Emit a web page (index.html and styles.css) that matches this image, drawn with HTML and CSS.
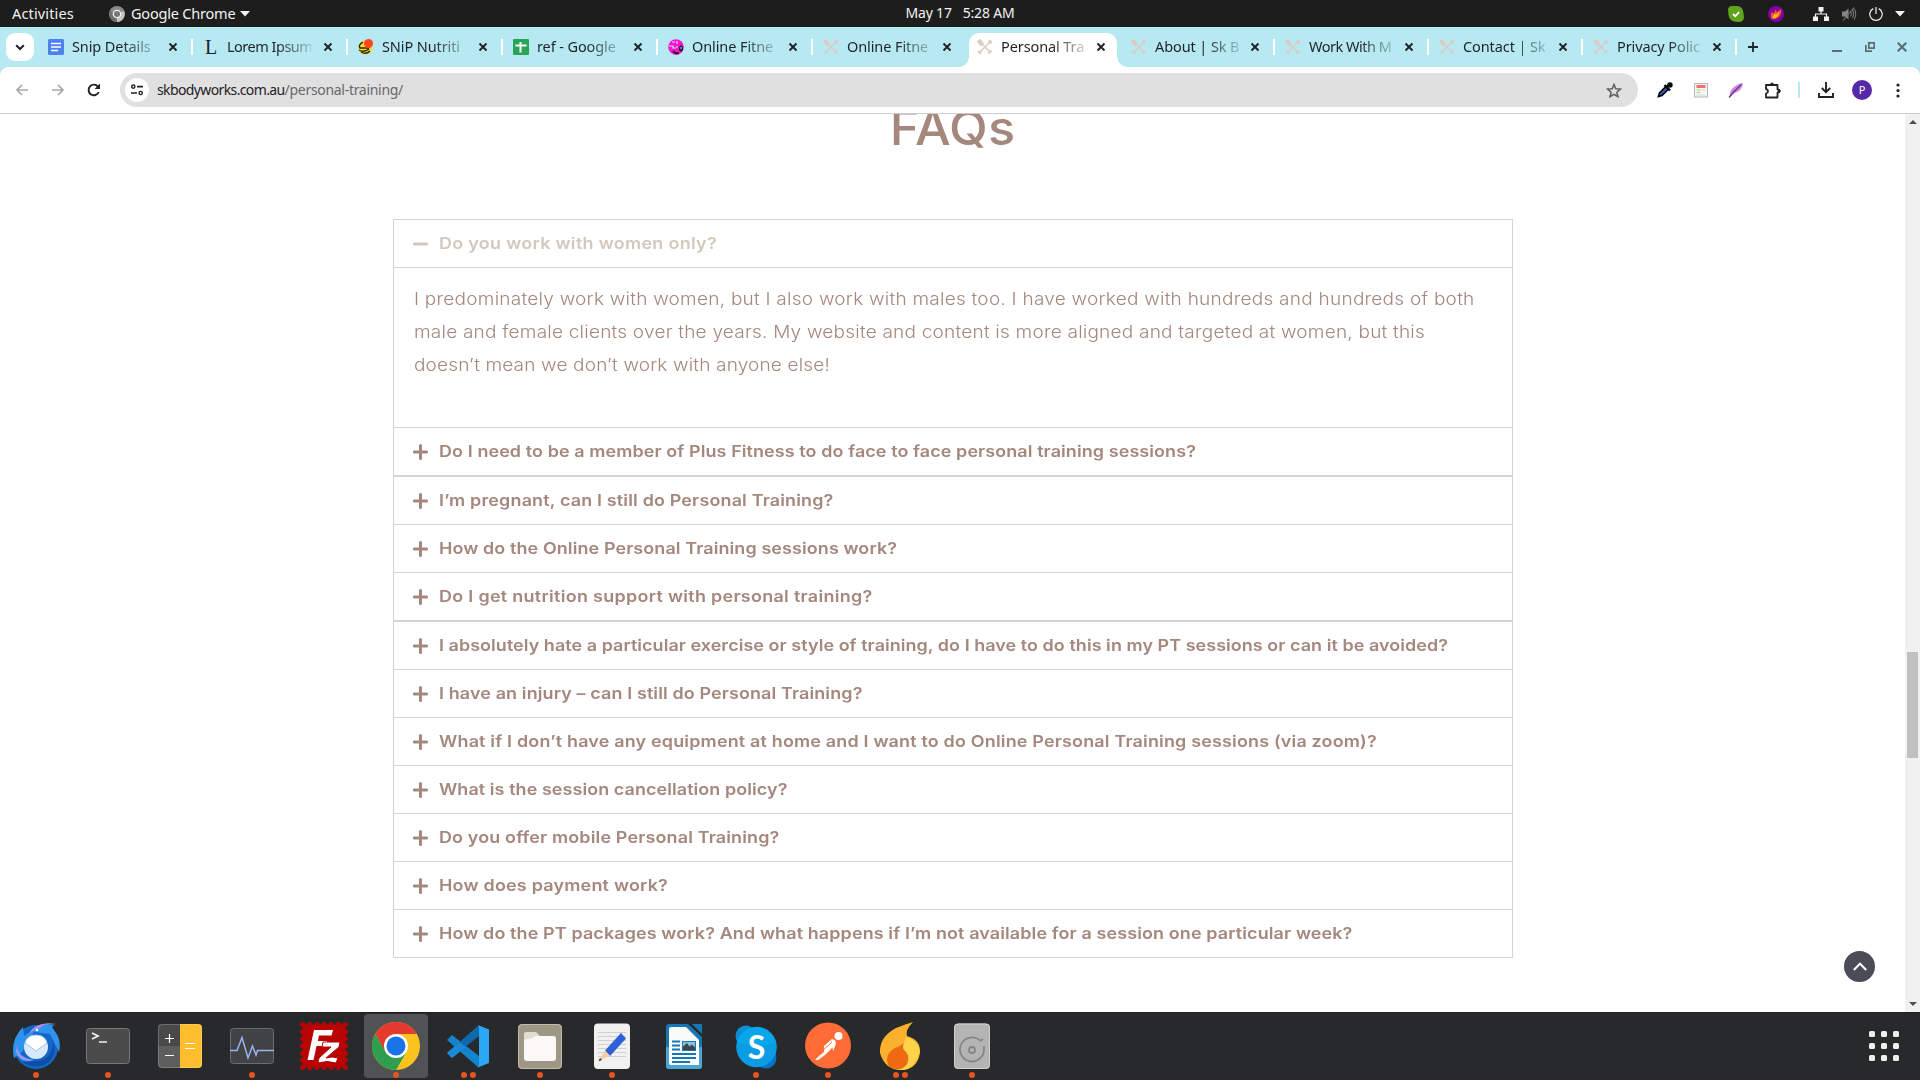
FILE: index.html
```html
<!DOCTYPE html>
<html lang="en">
<head>
<meta charset="utf-8">
<title>Personal Training</title>
<link rel="stylesheet" href="styles.css">
</head>
<body>
<svg class="defs" width="0" height="0" aria-hidden="true">
  <symbol id="x" viewBox="0 0 10 10"><path d="M1.500 1.500 8.500 8.500M8.500 1.500 1.500 8.500" stroke="#1f2226" stroke-width="1.900"/></symbol>
  <symbol id="bells" viewBox="0 0 16 16"><path d="M3.500 3.500 13 13M12.500 3.500 3 13" stroke="#d9cdc3" stroke-width="1.500"/><path d="M1 2.500 3 1 5.500 4.500 4 6ZM11.500 14.500 14.500 11.500M1.200 12 4 14.800" fill="#d9cdc3" stroke="#d9cdc3" stroke-width="2"/><circle cx="13" cy="3" r="2" fill="#d9cdc3"/></symbol>
  <symbol id="plus" viewBox="0 0 15 16"><path d="M1.400 8H13.600M7.500 1.500V14.500" stroke="currentColor" stroke-width="3" stroke-linecap="round"/></symbol>
  <symbol id="minus" viewBox="0 0 15 16"><path d="M1.400 8H13.600" stroke="currentColor" stroke-width="3" stroke-linecap="round"/></symbol>
</svg>

<header class="topbar">
  <div class="top-left">
    <span class="t-act">Activities</span>
    <svg width="16" height="16" viewBox="0 0 16 16"><circle cx="8" cy="8" r="8" fill="#8a8a8a"/><path d="M8 8 15 5A8 8 0 0 1 8 16Z" fill="#c4c4c4"/><path d="M8 8 1 5A8 8 0 0 0 8 16Z" fill="#6f6f6f"/><circle cx="8" cy="8" r="3.700" fill="#777" stroke="#f0f0f0" stroke-width="1.300"/></svg>
    <span class="t-app">Google Chrome</span>
    <svg width="10" height="6" viewBox="0 0 10 6"><path d="M0 0H10L5 5.500Z" fill="#f2f2f2"/></svg>
  </div>
  <div class="clock"><span>May 17</span><span>5:28 AM</span></div>
  <div class="tray">
    <svg class="tr-skype" width="16" height="16" viewBox="0 0 16 16"><path d="M4 0H10Q15 1 15.500 7L16 12Q15 16 11 16L6 15.500Q1 14 .5 9L0 3Q1 0 4 0Z" fill="#5fa51b"/><path d="M5 8 7.300 10.200 11.200 6" fill="none" stroke="#fff" stroke-width="1.800"/></svg>
    <svg class="tr-flame" width="16" height="16" viewBox="0 0 16 16"><circle cx="8" cy="8" r="8" fill="#8600a8"/><path d="M3.500 12.500Q2 9 4 6L6 8 7.500 3.500 9 6.500 13 3Q14 9 9.500 12 6 14 3.500 12.500Z" fill="#ff5a1f"/><path d="M4.500 12Q5 9 7 7.500L8 9 11 5.500Q11 10 7.500 12Z" fill="#ffc51f"/></svg>
    <svg class="tr-net" width="16" height="14" viewBox="0 0 16 14"><path d="M5.500 0H10.500V4.500H5.500ZM0 9.500H5V14H0ZM11 9.500H16V14H11Z" fill="#f2f2f2"/><path d="M8 4V7M2.500 10V7H13.500V10" fill="none" stroke="#f2f2f2" stroke-width="1.200"/></svg>
    <svg class="tr-vol" width="16" height="16" viewBox="0 0 16 16"><path d="M1 5.500H4L7.500 2.500V13.500L4 10.500H1Z" fill="#858585"/><path d="M9.500 5.500Q11 8 9.500 10.500M11.500 4Q13.500 8 11.500 12M13 2.500Q16.500 8 13 13.500M2 14.500 13 1.500" fill="none" stroke="#777" stroke-width="1.100"/></svg>
    <svg class="tr-pow" width="14" height="14" viewBox="0 0 14 14"><path d="M4.300 1.600A6.200 6.200 0 1 0 9.700 1.600M7 0V7" fill="none" stroke="#f2f2f2" stroke-width="1.200"/></svg>
    <svg width="10" height="6" viewBox="0 0 10 6"><path d="M0 0H10L5 5.500Z" fill="#f2f2f2"/></svg>
  </div>
</header>

<nav class="tabs">
  <button class="tabsearch"><svg width="10" height="7" viewBox="0 0 10 7"><path d="M1.200 1.200 5 5 8.800 1.200" fill="none" stroke="#1f2226" stroke-width="2"/></svg></button>
  <div class="tab w"><svg width="16" height="16"><rect width="16" height="16" rx="1.500" fill="#4b82f0"/><path d="M3 4.500H13M3 8H13M3 11.500H10" stroke="#fff" stroke-width="1.700"/></svg><span class="title">Snip Details</span><svg class="x"><use href="#x"/></svg></div>
  <div class="tab w"><span class="fav-l">L</span><span class="title tight">Lorem Ipsum</span><svg class="x"><use href="#x"/></svg></div>
  <div class="tab w"><svg width="16" height="16" viewBox="0 0 16 16"><circle cx="7.500" cy="8.500" r="7" fill="#fbd926"/><path d="M5 3Q0 6 2 9H11M1 11Q6 14 11 10M3 13Q8 16 12 12" fill="none" stroke="#2b2410" stroke-width="1.400"/><circle cx="10.500" cy="4.500" r="4.500" fill="#ff4a1f"/></svg><span class="title">SNiP Nutriti</span><svg class="x"><use href="#x"/></svg></div>
  <div class="tab w"><svg width="16" height="16"><rect width="16" height="16" rx="1" fill="#2aa557"/><path d="M2.500 6.500H13.500M7.500 3V13.500" stroke="#fff" stroke-width="2"/></svg><span class="title">ref - Google</span><svg class="x"><use href="#x"/></svg></div>
  <div class="tab w"><svg width="16" height="16" viewBox="0 0 16 16"><circle cx="8" cy="8" r="7.800" fill="#ff12cf"/><path d="M4 3H7M1 7H5V9H8M9 2V5M8 8H10" stroke="#b7eaf3" stroke-width="1.200" fill="none"/><path d="M5 12 8 14.500 11 14" stroke="#222" stroke-width="2" fill="none"/><ellipse cx="13" cy="9.500" rx="2" ry="3" fill="#15232b"/><circle cx="13" cy="9" r=".8" fill="#fff"/></svg><span class="title">Online Fitne</span><svg class="x"><use href="#x"/></svg></div>
  <div class="tab nosep"><svg class="bells"><use href="#bells"/></svg><span class="title">Online Fitne</span><svg class="x"><use href="#x"/></svg></div>
  <div class="tab active nosep"><svg class="bells"><use href="#bells"/></svg><span class="title">Personal Tra</span><svg class="x"><use href="#x"/></svg></div>
  <div class="tab"><svg class="bells"><use href="#bells"/></svg><span class="title">About | Sk B</span><svg class="x"><use href="#x"/></svg></div>
  <div class="tab"><svg class="bells"><use href="#bells"/></svg><span class="title tight">Work With M</span><svg class="x"><use href="#x"/></svg></div>
  <div class="tab"><svg class="bells"><use href="#bells"/></svg><span class="title">Contact | Sk</span><svg class="x"><use href="#x"/></svg></div>
  <div class="tab"><svg class="bells"><use href="#bells"/></svg><span class="title">Privacy Polic</span><svg class="x"><use href="#x"/></svg></div>
  <svg class="newtab" width="10" height="10"><path d="M0 5H10M5 0V10" stroke="#1f2226" stroke-width="1.800"/></svg>
  <div class="wm">
    <svg width="10" height="10"><path d="M0 9H10" stroke="#5d6a72" stroke-width="2"/></svg>
    <svg width="10" height="10"><path d="M3.800 .8H9.200V6.200H3.800ZM.8 3V9.200H7" fill="none" stroke="#5d6a72" stroke-width="1.700"/></svg>
    <svg width="10" height="10"><path d="M.7.7 9.300 9.300M9.300.7.7 9.300" stroke="#5d6a72" stroke-width="2"/></svg>
  </div>
</nav>

<div class="toolbar">
  <svg class="nav-i" width="12" height="12"><path d="M12 6H1.500M6 1 1 6 6 11" fill="none" stroke="#a4a6a8" stroke-width="1.600"/></svg>
  <svg class="nav-i" width="12" height="12"><path d="M0 6H10.500M6 1 11 6 6 11" fill="none" stroke="#a4a6a8" stroke-width="1.600"/></svg>
  <svg class="nav-i reload" width="14" height="14" viewBox="0 0 14 14"><path d="M11.800 9A5.300 5.300 0 1 1 11 3.600L12 4.600" fill="none" stroke="#1f2226" stroke-width="1.900"/><path d="M13 .6V6H7.600Z" fill="#1f2226"/></svg>
  <div class="omni">
    <span class="site"><svg width="12" height="12" viewBox="0 0 12 12"><circle cx="2.300" cy="2.600" r="1.600" fill="none" stroke="#1f2226" stroke-width="1.400"/><circle cx="9.700" cy="9" r="1.600" fill="none" stroke="#1f2226" stroke-width="1.400"/><path d="M6 2.600H12M0 9H6" stroke="#1f2226" stroke-width="1.700"/></svg></span>
    <span class="url"><b>skbodyworks.com.au</b><i>/personal-training/</i></span>
    <svg class="star" width="16" height="15" viewBox="0 0 16 15"><path d="M8 1.500 9.800 5.700 14.500 6.100 10.900 9.200 12 13.700 8 11.300 4 13.700 5.100 9.200 1.500 6.100 6.200 5.700Z" fill="none" stroke="#5c5e61" stroke-width="1.500"/></svg>
  </div>
  <div class="ext">
    <svg class="e1" width="16" height="16" viewBox="0 0 16 16"><path d="M1.500 14.500 2.500 11 9 4.500 11.500 7 5 13.500Z" fill="#3c55c4" stroke="#050505" stroke-width="1.700"/><path d="M7.500 3 13 8.500M9.500 5 12.500 2" stroke="#050505" stroke-width="2.400"/><circle cx="13" cy="3" r="2.700" fill="#050505"/></svg>
    <svg class="e2" width="14" height="15" viewBox="0 0 14 15"><rect x=".5" y=".5" width="13" height="13.500" fill="#f6f6f6" stroke="#b5b5b5"/><path d="M2.500 3.500H11.500" stroke="#fa6d6d" stroke-width="3"/><path d="M2.500 7H6.500M2.500 9.500H6.500" stroke="#9bd66a" stroke-width="1.100"/><path d="M8 7H11.500M2.500 12H11.500" stroke="#d8d8d8"/></svg>
    <svg class="e3" width="16" height="16" viewBox="0 0 16 16"><path d="M2 14Q1 9 6 5T15 1Q14 8 9 10T2 14Z" fill="#c68adb"/><path d="M1 15.500Q6 9 13.500 2.500" fill="none" stroke="#74309a" stroke-width="1.300"/></svg>
    <svg class="e4" width="17" height="17" viewBox="0 0 17 17"><path d="M2 3H13.500V7.500Q15.800 7.500 15.800 9T13.500 10.500V15.500H2V11.500Q4 11 4 9.200T2 7Z" fill="none" stroke="#1f2226" stroke-width="1.800" stroke-linejoin="round"/><path d="M6 3Q6 .5 8 .5T10 3M14 7.500Q17 8 16.500 9.500T14 10.500Z" fill="#1f2226"/></svg>
    <i class="vsep"></i>
    <svg class="e5" width="16" height="16" viewBox="0 0 16 16"><path d="M8 0V10M3.800 6 8 10.200 12.200 6M1 11V15H15V11" fill="none" stroke="#1f2226" stroke-width="1.900"/></svg>
    <span class="avatar">P</span>
    <svg width="4" height="15"><circle cx="2" cy="2" r="1.600" fill="#1f2226"/><circle cx="2" cy="7.500" r="1.600" fill="#1f2226"/><circle cx="2" cy="13" r="1.600" fill="#1f2226"/></svg>
  </div>
</div>

<div class="viewport">
  <main class="page">
    <h2>FAQs</h2>
    <div class="acc">
      <div class="q open"><svg><use href="#minus"/></svg><span class="q1">Do you work with women only?</span></div>
      <div class="a"><p><span class="a1">I predominately work with women, but I also work with males too. I have worked with hundreds and hundreds of both</span><span class="a2">male and female clients over the years. My website and content is more aligned and targeted at women, but this</span><span class="a3">doesn’t mean we don’t work with anyone else!</span></p></div>
      <div class="q"><svg><use href="#plus"/></svg><span class="q2">Do I need to be a member of Plus Fitness to do face to face personal training sessions?</span></div>
      <div class="q dbl"><svg><use href="#plus"/></svg><span class="q3">I’m pregnant, can I still do Personal Training?</span></div>
      <div class="q"><svg><use href="#plus"/></svg><span class="q4">How do the Online Personal Training sessions work?</span></div>
      <div class="q"><svg><use href="#plus"/></svg><span class="q5">Do I get nutrition support with personal training?</span></div>
      <div class="q dbl"><svg><use href="#plus"/></svg><span class="q6">I absolutely hate a particular exercise or style of training, do I have to do this in my PT sessions or can it be avoided?</span></div>
      <div class="q"><svg><use href="#plus"/></svg><span class="q7">I have an injury – can I still do Personal Training?</span></div>
      <div class="q"><svg><use href="#plus"/></svg><span class="q8">What if I don’t have any equipment at home and I want to do Online Personal Training sessions (via zoom)?</span></div>
      <div class="q"><svg><use href="#plus"/></svg><span class="q9">What is the session cancellation policy?</span></div>
      <div class="q"><svg><use href="#plus"/></svg><span class="q10">Do you offer mobile Personal Training?</span></div>
      <div class="q"><svg><use href="#plus"/></svg><span class="q11">How does payment work?</span></div>
      <div class="q"><svg><use href="#plus"/></svg><span class="q12">How do the PT packages work? And what happens if I’m not available for a session one particular week?</span></div>
    </div>
    <a class="totop"><svg width="14" height="9" viewBox="0 0 14 9"><path d="M.8 8 7 1.600 13.200 8" fill="none" stroke="#fff" stroke-width="2"/></svg></a>
  </main>
  <div class="scroll">
    <svg width="8" height="4"><path d="M0 4 4 0 8 4Z" fill="#505050"/></svg>
    <div class="thumb"></div>
    <svg class="down" width="8" height="4"><path d="M0 0 4 4 8 0Z" fill="#505050"/></svg>
  </div>
</div>

<footer class="dock">
  <div class="app"><svg viewBox="0 0 48 48"><circle cx="24" cy="25" r="22" fill="#1467c8"/><path d="M2 36Q-2 18 11 5L12 14 18 10Q26 -1 44 3 38 3 42 8 50 18 47 30L38 12 22 10 10 30Z" fill="#2f93ee"/><path d="M17 12Q22 0 44 1 30 2 28 6Q20 8 17 12Z" fill="#b48aea"/><path d="M5 22Q5 36 22 38Q8 42 4 30Z" fill="#8f9bf2"/><path d="M26 39Q42 36 41 18 46 34 34 42 22 48 10 40Z" fill="#0d4fa8"/><ellipse cx="24" cy="25" rx="12" ry="12" fill="#d7eafc"/><path d="M13 21 24 29 35 21Q33 13 24 13T13 21Z" fill="#fff" stroke="#9fc4ee"/><circle cx="25" cy="8" r="1.300" fill="#fff"/></svg><i></i></div>
  <div class="app"><svg viewBox="0 0 48 48"><rect x="2.500" y="6.500" width="43" height="35" rx="3" fill="#4b4b4b" stroke="#777"/><path d="M8 11 14 14 8 17M15 20H23" fill="none" stroke="#f4f4f4" stroke-width="1.700"/></svg><i></i></div>
  <div class="app"><svg viewBox="0 0 48 48"><rect x="2" y="2" width="44" height="44" rx="4" fill="#5d5d5d"/><path d="M2 24V6Q2 2 6 2H24V24Z" fill="#494949"/><path d="M24 2H42Q46 2 46 6V42Q46 46 42 46H24Z" fill="#fdbd2d"/><path d="M9 16.500H18M13.500 12V21M9 33.500H18M29 21.500H39M29 26.500H39" stroke="#fff" stroke-width="1.200"/><rect x="2.500" y="2.500" width="43" height="43" rx="4" fill="none" stroke="#fff" stroke-opacity=".2"/></svg></div>
  <div class="app"><svg viewBox="0 0 48 48"><rect x="2.500" y="6.500" width="43" height="35" rx="3" fill="#414244" stroke="#6c6c6c"/><path d="M2 28.500H9L14 15.500 20 36 24.500 24 28 33 29.500 28.500H46" fill="none" stroke="#9cb2f2" stroke-width="1.500"/></svg><i></i></div>
  <div class="app"><svg viewBox="0 0 48 48"><rect x="2.500" y="2.500" width="43" height="43" fill="#b90404"/><rect x="2.500" y="2.500" width="43" height="43" fill="none" stroke="#b90404" stroke-width="5" stroke-dasharray="0 7.166" stroke-linecap="round"/><path d="M14 8H33L31.500 13.500H19L17.800 19H27L26 24H16.500L13.500 38H7.500Z" fill="#fff"/><path d="M23 20H40L39 25 26 36Q32 34 38 36L36 41Q27 38 18 41L19 36 31 25H22Z" fill="#fff" stroke="#b90404"/></svg></div>
  <div class="app on"><svg viewBox="0 0 48 48"><circle cx="24" cy="24" r="24" fill="#fcc31e"/><path d="M24 24V12H44.800A24 24 0 0 0 3.200 12L13.600 30Z" fill="#e33b2e"/><path d="M3.200 12A24 24 0 0 0 24 48L34.400 30 24 24 13.600 30Z" fill="#2f9e4f"/><circle cx="24" cy="24" r="12" fill="#fff"/><circle cx="24" cy="24" r="9.500" fill="#1a73e8"/></svg><i></i></div>
  <div class="app"><svg viewBox="0 0 48 48"><path d="M3 18 8 13 35 34V46Z" fill="#1283cc"/><path d="M3 31 8 36 35 14V3Z" fill="#0c69ae"/><path d="M3 31 8 36 22 25 15.500 20Z" fill="#1b8ad6"/><path d="M34 3 45 7.500V41L34 45.500Q35 45 35 42V6Q35 4 34 3Z" fill="#2aa7f5"/></svg><i></i><i></i></div>
  <div class="app"><svg viewBox="0 0 48 48"><rect x="2" y="2" width="44" height="45" rx="4" fill="#9f9785"/><rect x="2.500" y="2.500" width="43" height="44" rx="4" fill="none" stroke="#c3bcab"/><path d="M8 12Q8 10 10 10H20L24 14H37Q39 14 39 16V20H8Z" fill="#e2ddd2"/><rect x="8" y="14" width="32" height="25" rx="3" fill="#faf9f8"/><path d="M8 18V13H20L17 16Z" fill="#e2ddd2"/></svg><i></i></div>
  <div class="app"><svg viewBox="0 0 48 48"><rect x="6" y="1.500" width="36" height="45.500" rx="4" fill="#f1f1f1"/><path d="M10 10.500H38M10 14.500H38M10 18.500H38M10 22.500H38M10 26.500H38M10 30.500H38M10 34.500H38" stroke="#d0d0d0" stroke-width="1"/><path d="M33 11 38 16.500 22 34 17 28.500Z" fill="#2f60d8"/><path d="M17 28.500 22 34 10.500 39Z" fill="#f5cfa4"/><path d="M12 36 14 38 10.500 39.300Z" fill="#333"/></svg><i></i></div>
  <div class="app"><svg viewBox="0 0 48 48"><rect x="6" y="2" width="36" height="45" rx="3" fill="#1377b4"/><path d="M6 25H42V44Q42 47 39 47H9Q6 47 6 44Z" fill="#4ba5d5"/><path d="M11 5H26L39 18V43H11Q9 43 9 41V7Q9 5 11 5Z" fill="#fafafa"/><path d="M28 2H42V15Z" fill="#25292c"/><path d="M32 2H42V12Z" fill="#1377b4"/><path d="M12 19.500H20M12 23.500H20M12 27.500H20M12 32H36M12 36H36M12 40H30" stroke="#1377b4" stroke-width="1.900"/><rect x="22" y="19" width="14" height="10" fill="#83c3ef"/><path d="M22.500 28.500V25L27 21 29.500 24.500 32 22.500 35.500 26V28.500Z" fill="#444"/><path d="M33 19H36V22Z" fill="#ffc21f"/><rect x="22.500" y="19.500" width="13" height="9" fill="none" stroke="#1377b4"/></svg></div>
  <div class="app"><svg viewBox="0 0 48 48"><circle cx="14" cy="14" r="10.500" fill="#0a8fd6"/><circle cx="34" cy="36" r="10.500" fill="#0573c9"/><circle cx="24.500" cy="25" r="20.300" fill="#0c9ce6"/><path d="M5 20A20.300 20.300 0 0 1 44 20Q30 26 5 20Z" fill="#06aeee" opacity=".6"/><text x="24.500" y="36.500" text-anchor="middle" class="sk">S</text></svg><i></i></div>
  <div class="app"><svg viewBox="0 0 48 48"><circle cx="24" cy="23.500" r="23" fill="#ff6c37"/><circle cx="34.500" cy="14" r="4" fill="#fff"/><path d="M20 24 28 17Q32 18 32 21L27 27 21 33 17 36 14 38 11 38 15 34 20 30ZM28 23 32 22 29 29Z" fill="#fff"/><path d="M17 30 28 20" stroke="#ff6c37"/></svg><i></i></div>
  <div class="app"><svg viewBox="0 0 48 48"><path d="M37 0Q29 8 31 14 45 18 44 31 41 48 25 48T4 31Q3 15 20 6 30 2 37 0Z" fill="#fbb12d"/><path d="M8 38Q16 46 22 38L30 15Q46 20 43 32 38 48 25 48 14 47 8 38Z" fill="#fdd34a"/><path d="M28 21Q25 26 30 30 34 35 31 42 27 48 21 47 11 47 11 38 11 30 19 26 25 24 28 21Z" fill="#ee6a12"/></svg><i></i><i></i></div>
  <div class="app"><svg viewBox="0 0 48 48"><rect x="6" y="1.500" width="36" height="45.500" rx="4" fill="#b4b4b4"/><rect x="6.500" y="2" width="35" height="44.500" rx="4" fill="none" stroke="#cfcfcf"/><path d="M32.500 19A12 12 0 1 0 36 27V24M32.500 19 35 17" fill="none" stroke="#858585" stroke-width="1.800"/><circle cx="24" cy="28" r="3" fill="none" stroke="#858585" stroke-width="1.800"/></svg><i></i></div>
  <div class="grid"><b></b><b></b><b></b><b></b><b></b><b></b><b></b><b></b><b></b></div>
</footer>
</body>
</html>
```
FILE: styles.css
```css
* { box-sizing: border-box; }
body { margin: 0; width: 1920px; height: 1080px; overflow: hidden; display: flex; flex-direction: column; background: #fff; font-family: "Noto Sans", sans-serif; font-size: 15px; color: #1f2226; }
svg { display: block; flex: none; }
.defs { position: absolute; }

.topbar { height: 27px; flex: none; background: #1d1d1d; color: #f2f2f2; display: grid; grid-template-columns: 1fr auto 1fr; align-items: center; font-size: 14.5px; line-height: 27px; }
.top-left { display: flex; align-items: center; padding-left: 12px; }
.t-act { width: 97px; letter-spacing: .15px; }
.t-app { margin: 0 5px 0 6px; width: 104px; white-space: nowrap; letter-spacing: -.2px; }
.clock { display: flex; gap: 11px; white-space: nowrap; font-size: 14px; letter-spacing: -.2px; line-height: 25px; align-self: start; }
.tray { display: flex; align-items: center; justify-content: flex-end; padding-right: 15px; }
.tr-skype { margin-right: 24px; }
.tr-flame { margin-right: 29px; }
.tr-net { margin-right: 12px; }
.tr-vol { margin-right: 12px; }
.tr-pow { margin-right: 12px; }

.tabs { height: 40px; flex: none; background: #b7e9f2; display: flex; align-items: center; padding: 0 13px 0 6px; }
.tabsearch { width: 28px; height: 28px; margin-right: 4px; padding: 0; border: 0; border-radius: 9px; background: #fff; display: grid; place-items: center; }
.tab { position: relative; width: 154px; height: 40px; padding: 0 0 0 10px; display: flex; align-items: center; flex: none; }
.tab.w { width: 155px; }
.tab::after { content: ""; position: absolute; right: 0; top: 12px; width: 2px; height: 16px; background: #fff; }
.tab.nosep::after { display: none; }
.title { width: 84px; margin-left: 8px; white-space: nowrap; font-size: 14.5px; letter-spacing: -.1px; line-height: 24px; padding-bottom: 2px; -webkit-mask-image: linear-gradient(90deg, #000 50px, rgba(0,0,0,.2) 84px); mask-image: linear-gradient(90deg, #000 50px, rgba(0,0,0,.2) 84px); }
.title.tight { letter-spacing: -.5px; }
.x { width: 10px; height: 10px; margin-left: 11px; }
.tab.w .x { margin-left: 12px; }
.bells { width: 16px; height: 16px; }
.fav-l { width: 16px; font: 20px/24px "Liberation Serif", serif; text-align: center; }
.active { z-index: 1; }
.active::before { content: ""; position: absolute; z-index: -1; left: 2px; right: 4px; top: 6px; bottom: 0; background: #fff; border-radius: 10px 10px 0 0; }
.active::after, .active.nosep::after { display: block; left: -8px; right: -6px; top: auto; bottom: 0; width: auto; height: 10px; background: radial-gradient(circle at 0 0, transparent 9.5px, #fff 10px) 0 0 / 10px 10px no-repeat, radial-gradient(circle at 100% 0, transparent 9.5px, #fff 10px) 100% 0 / 10px 10px no-repeat; z-index: -1; }
.newtab { margin-left: 11px; }
.wm { margin-left: auto; display: flex; gap: 22.5px; }

.toolbar { height: 47px; flex: none; border-bottom: 1px solid #cbcdcf; background: radial-gradient(circle at 8px 8px, #fff 7.5px, #b7e9f2 8px) 0 0 / 8px 8px no-repeat, radial-gradient(circle at 0 8px, #fff 7.5px, #b7e9f2 8px) 100% 0 / 8px 8px no-repeat, #fff; display: flex; align-items: center; padding: 0 20px 0 16px; }
.nav-i { margin-right: 24px; }
.reload { margin: 0 19px 0 -1px; }
.omni { width: 1518px; height: 34px; flex: none; border-radius: 17px; background: #e0e0e0; display: flex; align-items: center; padding: 0 16px 0 5px; }
.site { width: 24px; height: 24px; border-radius: 50%; background: #fff; display: grid; place-items: center; margin-right: 8px; }
.url { font-size: 14px; white-space: nowrap; padding-bottom: 1px; }
.url b, .url i { font-weight: 400; font-style: normal; }
.url b { letter-spacing: -.62px; }
.url i { color: #66686b; letter-spacing: -.3px; }
.star { margin-left: auto; }
.ext { flex: 1; display: flex; align-items: center; justify-content: flex-end; }
.e1, .e2 { margin-right: 20.5px; }
.e3 { margin-right: 20px; }
.e4 { margin-right: 17px; }
.vsep { margin-right: 18px; width: 2px; height: 16px; background: #b7e9f2; }
.e5 { margin-right: 18px; }
.avatar { margin-right: 24px; width: 20px; height: 20px; border-radius: 50%; background: #5627a6; color: #fff; font-size: 11px; line-height: 20px; text-align: center; }

.viewport { height: 898px; flex: none; display: flex; }
.page { position: relative; width: 1905px; overflow: hidden; color: #a4877d; font-family: Inter, sans-serif; }
h2 { margin: -19px 0 0; height: 124px; font-size: 48px; line-height: 66px; font-weight: 500; letter-spacing: .2px; text-align: center; transform: scaleX(1.05); }
.acc { width: 1120px; margin-left: 393px; border: 1px solid #d4d4d4; }
.q { height: 48px; border-top: 1px solid #d4d4d4; padding-left: 19px; display: flex; align-items: center; font-size: 16px; font-weight: 600; white-space: nowrap; }
.q.open { height: 47px; border-top: 0; color: #d4c8bc; }
.q.dbl { height: 49px; border-top-width: 2px; }
.q svg { width: 15px; height: 16px; margin-right: 11px; }
.q span { padding-bottom: 2px; transform: scaleX(1.12); transform-origin: 0 50%; }
.q1 { letter-spacing: .279px; }
.q2 { letter-spacing: .096px; }
.q3 { letter-spacing: .154px; }
.q4 { letter-spacing: .103px; }
.q5 { letter-spacing: .277px; }
.q6 { letter-spacing: .059px; }
.q7 { letter-spacing: .118px; }
.q8 { letter-spacing: .17px; }
.q9 { letter-spacing: .079px; }
.q10 { letter-spacing: .145px; }
.q11 { letter-spacing: .203px; }
.q12 { letter-spacing: .12px; }
.a { height: 160px; border-top: 1px solid #d4d4d4; padding: 15px 19.5px; font-size: 17px; font-weight: 300; line-height: 33px; white-space: nowrap; }
.a p { margin: 0; }
.a span { display: block; width: max-content; transform: scaleX(1.12); transform-origin: 0 50%; }
.a1 { letter-spacing: .213px; }
.a2 { letter-spacing: .186px; }
.a3 { letter-spacing: .135px; }
.totop { position: absolute; right: 30px; bottom: 30px; width: 31px; height: 31px; border-radius: 50%; background: #4a4d57; display: grid; place-items: center; }
.scroll { width: 15px; background: #f1f1f1; display: flex; flex-direction: column; align-items: center; padding: 6px 0; }
.thumb { width: 11px; height: 106px; margin-top: 528px; background: #c1c1c1; }
.down { margin-top: auto; }

.dock { height: 68px; flex: none; background: #28292b; display: flex; padding: 1px 21px 2px 4px; border-top: 1px solid #1d1e20; gap: 8px; }
.app { position: relative; width: 64px; height: 64px; border-radius: 4px; display: flex; justify-content: center; align-items: flex-end; gap: 3px; }
.app.on { background: #515254; }
.app svg { position: absolute; left: 8px; top: 8px; width: 48px; height: 48px; }
.app i { width: 6px; height: 6px; border-radius: 50%; background: #e95420; }
.sk { font: 700 32px Lato, sans-serif; fill: #fff; }
.grid { margin: 17px 0 0 auto; display: grid; grid-template-columns: repeat(3, 6px); grid-auto-rows: 6px; gap: 6px; }
.grid b { background: #efefec; border-radius: 1.500px; }
```
